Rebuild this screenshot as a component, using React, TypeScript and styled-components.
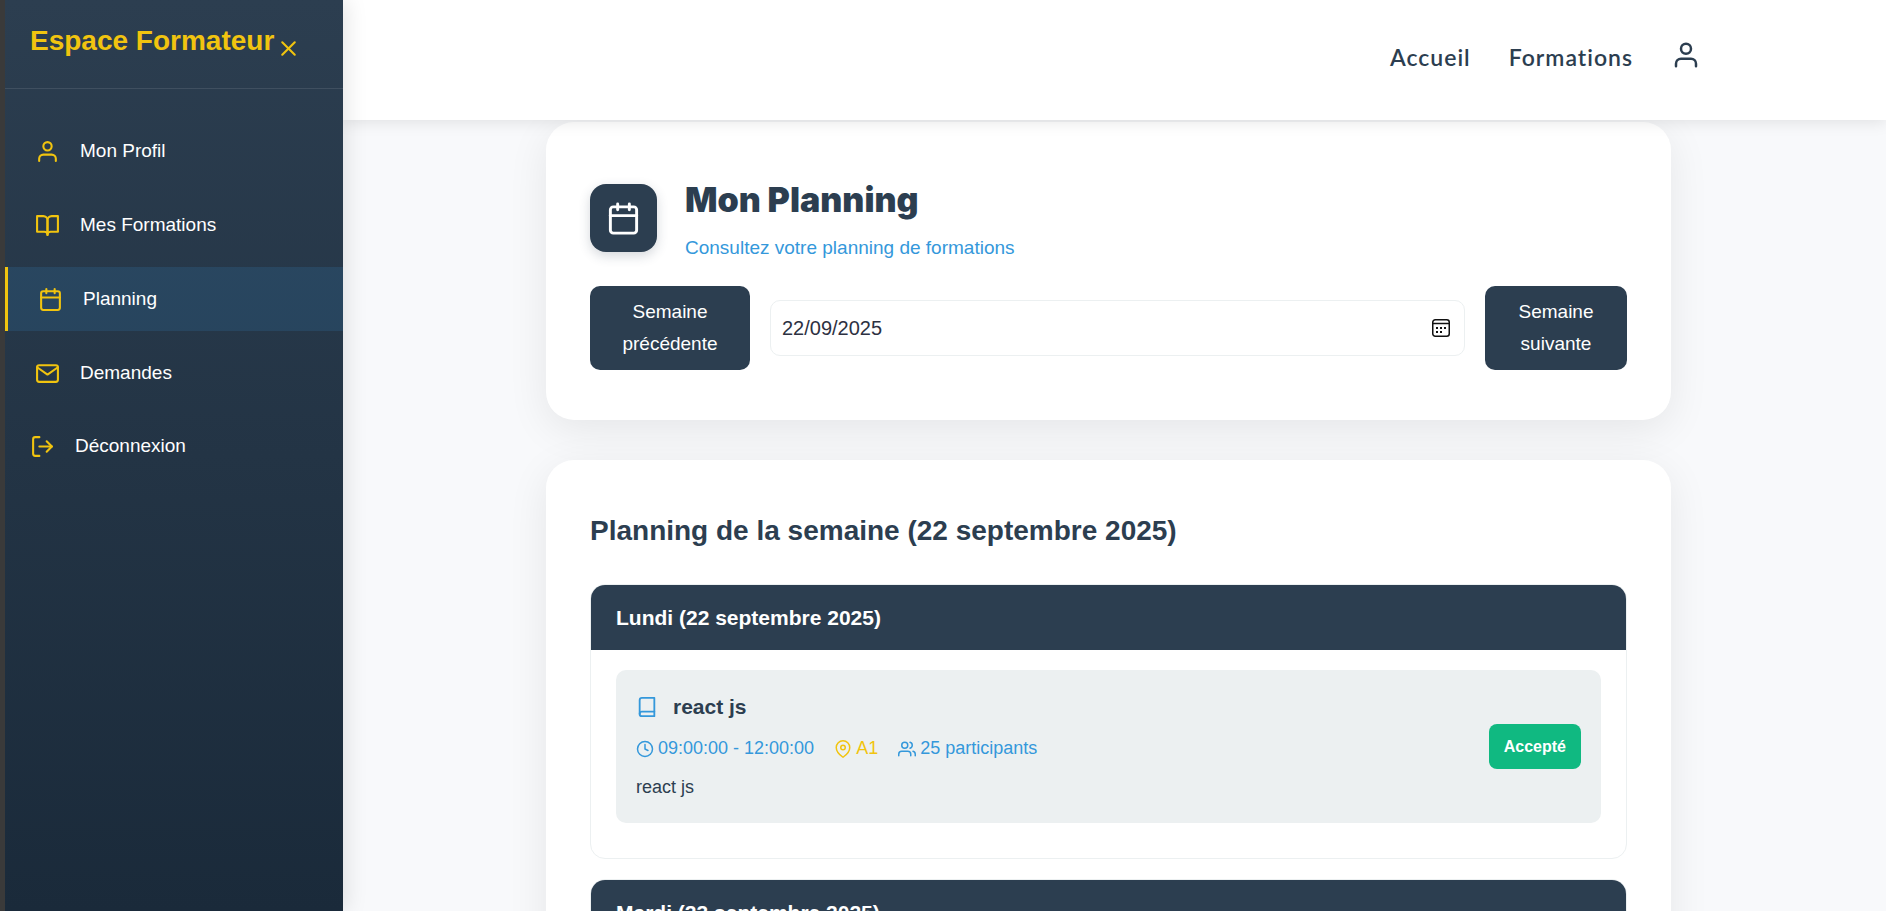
import React, { useState } from "react";
import styled, { createGlobalStyle } from "styled-components";
import {
  FiBook,
  FiBookOpen,
  FiCalendar,
  FiClock,
  FiLogOut,
  FiMail,
  FiMapPin,
  FiUser,
  FiUsers,
  FiX,
} from "react-icons/fi";

const navy = "#2c3e50";
const yellow = "#f1c40f";
const blue = "#3498db";
const mist = "#ecf0f1";

const GlobalStyle = createGlobalStyle`
  *, *::before, *::after { box-sizing: border-box; }
  html, body, #root { height: 100%; }
  body {
    margin: 0;
    overflow: hidden;
    background: #f8f9fb;
    color: ${navy};
    font-family: "Liberation Sans", Arial, sans-serif;
    font-size: 19px;
    line-height: 32px;
  }
  h1, h2, h3, h4, p, ul { margin: 0; padding: 0; }
  button, input { font: inherit; }
  a { color: inherit; text-decoration: none; }
  svg { flex: none; display: block; }
`;

const Shell = styled.div`
  display: grid;
  grid-template-columns: 343px minmax(0, 1fr);
  grid-template-rows: 120px minmax(0, 1fr);
  height: 100%;
`;

const Sidebar = styled.aside`
  grid-row: 1 / 3;
  z-index: 3;
  border-left: 5px solid #3a3a3a;
  background: linear-gradient(180deg, #2c3e50 0%, #1a2a3a 100%) padding-box;
  color: #fff;
  box-shadow: 4px 0 20px rgba(0, 0, 0, 0.1);
`;

const SidebarHeader = styled.div`
  display: flex;
  align-items: flex-end;
  gap: 2px;
  height: 89px;
  padding: 0 25px 27px;
  border-bottom: 1px solid rgba(255, 255, 255, 0.1);
`;

const SidebarTitle = styled.h2`
  color: ${yellow};
  font-size: 28px;
  line-height: 40px;
  white-space: nowrap;
`;

const CloseButton = styled.button`
  display: flex;
  padding: 0;
  border: 0;
  background: none;
  color: ${yellow};
  cursor: pointer;
`;

const SidebarNav = styled.nav`
  display: flex;
  flex-direction: column;
  gap: 10px;
  padding-top: 30px;
`;

const SidebarLink = styled.a<{ $active?: boolean }>`
  display: flex;
  align-items: center;
  gap: 20px;
  height: 64px;
  padding: 0 30px;
  border-left: ${(p) => (p.$active ? `3px solid ${yellow}` : "0")};
  background: ${(p) => (p.$active ? "rgba(52, 152, 219, 0.15)" : "none")};
  svg { color: ${yellow}; }
`;

const LogoutButton = styled.button`
  display: flex;
  align-items: center;
  gap: 20px;
  height: 62px;
  padding: 0 25px;
  border: 0;
  background: none;
  color: #fff;
  cursor: pointer;
  svg { color: ${yellow}; }
`;

const TopBar = styled.header`
  z-index: 2;
  display: flex;
  align-items: center;
  justify-content: flex-end;
  padding: 0 185px 6px 40px;
  background: #fff;
  box-shadow: 0 2px 15px rgba(0, 0, 0, 0.1);
`;

const TopNav = styled.nav`
  display: flex;
  align-items: center;
  gap: 38px;
  font-family: Lato, sans-serif;
  font-size: 23px;
  font-weight: 600;
  letter-spacing: 1px;
`;

const AccountLink = styled.a`
  display: flex;
  padding-bottom: 4px;
`;

const Main = styled.main`
  display: flex;
  flex-direction: column;
  align-items: center;
  gap: 40px;
  overflow: hidden;
  padding: 2px 52px 0 40px;
`;

const Card = styled.section`
  flex: none;
  width: 100%;
  max-width: 1125px;
  padding: 50px 44px;
  border-radius: 28px;
  background: #fff;
  box-shadow: 0 10px 40px rgba(0, 0, 0, 0.08);
`;

const PageHeading = styled.div`
  display: flex;
  align-items: center;
  gap: 28px;
  margin-bottom: 22px;
`;

const HeadingIcon = styled.div`
  display: grid;
  place-items: center;
  width: 67px;
  height: 68px;
  border-radius: 16px;
  background: ${navy};
  color: #fff;
  box-shadow: 0 4px 12px rgba(44, 62, 80, 0.2);
`;

const PageTitle = styled.h1`
  margin-bottom: 4px;
  font-family: Inter, "Liberation Sans", sans-serif;
  font-size: 34px;
  font-weight: 900;
  line-height: 56px;
`;

const Subtitle = styled.p`
  color: ${blue};
`;

const WeekPicker = styled.div`
  display: flex;
  align-items: center;
  gap: 20px;
`;

const WeekButton = styled.button<{ $width: number }>`
  flex: none;
  width: ${(p) => p.$width}px;
  padding: 10px 25px;
  border: 0;
  border-radius: 10px;
  background: ${navy};
  color: #fff;
  cursor: pointer;
`;

const DateField = styled.div`
  display: flex;
  flex: 1;
  align-items: center;
  height: 56px;
  padding: 0 13px 0 11px;
  border: 1px solid ${mist};
  border-radius: 10px;
`;

const DateInput = styled.input`
  flex: 1;
  min-width: 0;
  padding: 0;
  border: 0;
  outline: 0;
  background: none;
  color: #2d3142;
  font-size: 20px;
`;

const PickerButton = styled.button`
  display: flex;
  padding: 0;
  border: 0;
  background: none;
  color: #111;
  cursor: pointer;
`;

const SectionTitle = styled.h2`
  margin-bottom: 32px;
  font-size: 28px;
  line-height: 42px;
`;

const DayList = styled.div`
  display: flex;
  flex-direction: column;
  gap: 20px;
`;

const Day = styled.article`
  overflow: hidden;
  border: 1px solid ${mist};
  border-radius: 15px;
`;

const DayTitle = styled.h3`
  padding: 16px 25px;
  background: ${navy};
  color: #fff;
  font-size: 21px;
  line-height: 33px;
`;

const DayBody = styled.div`
  padding: 20px 25px 35px;
`;

const Session = styled.div`
  display: flex;
  align-items: center;
  justify-content: space-between;
  padding: 20px;
  border-radius: 10px;
  background: ${mist};
`;

const SessionTitle = styled.h4`
  display: flex;
  align-items: center;
  gap: 15px;
  margin-bottom: 10px;
  font-size: 21px;
  line-height: 33px;
  svg { color: ${blue}; }
`;

const Meta = styled.div`
  display: flex;
  gap: 20px;
  margin-bottom: 8px;
  font-size: 18px;
  line-height: 31px;
`;

const MetaItem = styled.span<{ $color: string }>`
  display: flex;
  align-items: center;
  gap: 4px;
  color: ${(p) => p.$color};
`;

const Description = styled.p`
  font-size: 18px;
  line-height: 31px;
`;

const Status = styled.span`
  padding: 8px 15px;
  border-radius: 8px;
  background: #10b981;
  color: #fff;
  font-size: 16px;
  font-weight: 600;
  line-height: 29px;
`;

const PickerIcon = () => (
  <svg width="20" height="20" viewBox="0 0 20 20" fill="none" stroke="currentColor" strokeWidth="1.5" aria-hidden="true">
    <rect x="1.75" y="1.75" width="16.5" height="16.5" rx="2.5" />
    <path d="M2 5.5h16" />
    <path d="M5 10h2M9 10h2M13 10h2M5 14h2M9 14h2" strokeWidth="2" />
  </svg>
);

const links = [
  { label: "Mon Profil", Icon: FiUser },
  { label: "Mes Formations", Icon: FiBookOpen },
  { label: "Planning", Icon: FiCalendar, active: true },
  { label: "Demandes", Icon: FiMail },
];

const days = [
  {
    title: "Lundi (22 septembre 2025)",
    sessions: [
      { name: "react js", time: "09:00:00 - 12:00:00", room: "A1", people: "25 participants", text: "react js", status: "Accepté" },
    ],
  },
  { title: "Mardi (23 septembre 2025)", sessions: [] },
];

export default function App() {
  const [date, setDate] = useState("22/09/2025");
  return (
    <>
      <GlobalStyle />
      <Shell>
        <Sidebar>
          <SidebarHeader>
            <SidebarTitle>Espace Formateur</SidebarTitle>
            <CloseButton type="button" aria-label="Fermer le menu">
              <FiX size={25} />
            </CloseButton>
          </SidebarHeader>
          <SidebarNav>
            {links.map(({ label, Icon, active }) => (
              <SidebarLink key={label} href="#" $active={active}>
                <Icon size={25} />
                {label}
              </SidebarLink>
            ))}
            <LogoutButton type="button">
              <FiLogOut size={25} />
              Déconnexion
            </LogoutButton>
          </SidebarNav>
        </Sidebar>
        <TopBar>
          <TopNav>
            <a href="#">Accueil</a>
            <a href="#">Formations</a>
            <AccountLink href="#" aria-label="Mon compte">
              <FiUser size={30} />
            </AccountLink>
          </TopNav>
        </TopBar>
        <Main>
          <Card>
            <PageHeading>
              <HeadingIcon>
                <FiCalendar size={35} />
              </HeadingIcon>
              <div>
                <PageTitle>Mon Planning</PageTitle>
                <Subtitle>Consultez votre planning de formations</Subtitle>
              </div>
            </PageHeading>
            <WeekPicker>
              <WeekButton type="button" $width={160}>Semaine précédente</WeekButton>
              <DateField>
                <DateInput aria-label="Date" value={date} onChange={(e) => setDate(e.target.value)} />
                <PickerButton type="button" aria-label="Choisir une date">
                  <PickerIcon />
                </PickerButton>
              </DateField>
              <WeekButton type="button" $width={142}>Semaine suivante</WeekButton>
            </WeekPicker>
          </Card>
          <Card>
            <SectionTitle>Planning de la semaine (22 septembre 2025)</SectionTitle>
            <DayList>
              {days.map((day) => (
                <Day key={day.title}>
                  <DayTitle>{day.title}</DayTitle>
                  <DayBody>
                    {day.sessions.map((s) => (
                      <Session key={s.time}>
                        <div>
                          <SessionTitle>
                            <FiBook size={22} />
                            {s.name}
                          </SessionTitle>
                          <Meta>
                            <MetaItem $color={blue}><FiClock size={18} />{s.time}</MetaItem>
                            <MetaItem $color={yellow}><FiMapPin size={18} />{s.room}</MetaItem>
                            <MetaItem $color={blue}><FiUsers size={18} />{s.people}</MetaItem>
                          </Meta>
                          <Description>{s.text}</Description>
                        </div>
                        <Status>{s.status}</Status>
                      </Session>
                    ))}
                  </DayBody>
                </Day>
              ))}
            </DayList>
          </Card>
        </Main>
      </Shell>
    </>
  );
}
